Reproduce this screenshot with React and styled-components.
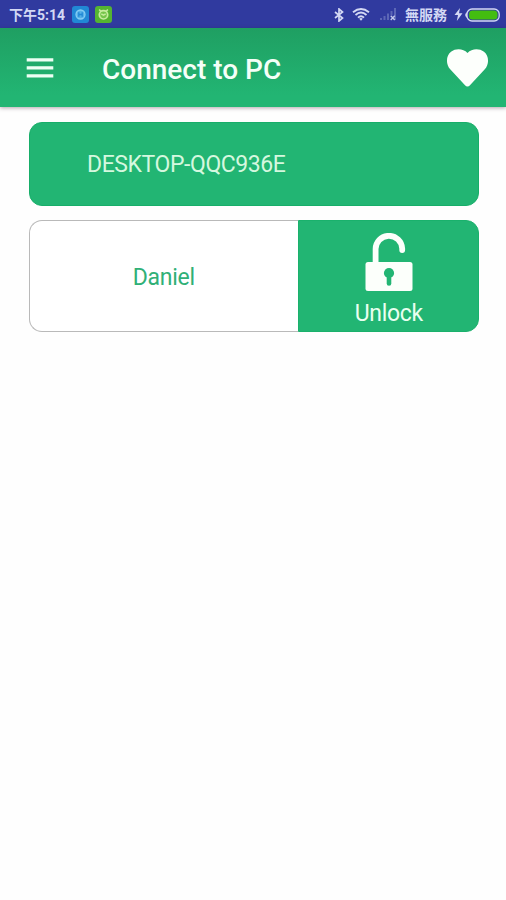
import React from 'react';
import styled, { createGlobalStyle } from 'styled-components';

const GREEN = '#22b573';

const GlobalStyle = createGlobalStyle`
  body {
    margin: 0;
    background: #fefefe;
    font-family: Roboto, 'Noto Sans CJK TC', sans-serif;
  }

  svg {
    display: block;
    flex: none;
  }
`;

const Screen = styled.div`
  width: 506px;
  min-height: 900px;
  overflow: hidden;
`;

const StatusBar = styled.div`
  box-sizing: border-box;
  display: flex;
  align-items: center;
  height: 28px;
  padding: 1px 6px 0 9px;
  background: #303a9f;
  color: #d3d8f4;
`;

const StatusText = styled.span`
  font-size: 14px;
  line-height: 20px;
  font-weight: 700;
  white-space: nowrap;
`;

const Notifications = styled.div`
  display: flex;
  gap: 6px;
  margin-left: 7px;
`;

const StatusIcons = styled.div`
  display: flex;
  align-items: center;
  margin-left: auto;
`;

const IconSlot = styled.div`
  margin-right: ${props => props.gap}px;
`;

const Carrier = styled(StatusText)`
  margin-right: 7px;
`;

const Header = styled.header`
  box-sizing: border-box;
  display: flex;
  align-items: center;
  height: 79px;
  padding: 0 17px 0 26px;
  background: linear-gradient(#1f9f62, ${GREEN} 85%);
  box-shadow: 0 1px 4px rgba(60, 30, 50, 0.4);
`;

const Title = styled.h1`
  flex: 1;
  margin: 5px 0 0 48px;
  color: #f4fff8;
  font-size: 28px;
  line-height: 34px;
  font-weight: 500;
`;

const IconButton = styled.button`
  padding: 0;
  border: 0;
  background: none;
  color: #fdfffc;
`;

const Content = styled.main`
  display: flex;
  flex-direction: column;
  gap: 14px;
  padding: 15px 27.5px 0 28.5px;
`;

const ComputerCard = styled.section`
  box-sizing: border-box;
  display: flex;
  align-items: center;
  height: 84px;
  padding: 2px 58px 0 57.5px;
  border: 1px solid #17ae69;
  border-radius: 13px;
  background: ${GREEN};
  color: #d5f8df;
  font-size: 23px;
  line-height: 28px;
  letter-spacing: -0.42px;
`;

const AccountCard = styled.section`
  display: grid;
  grid-template-columns: 269.5px 1fr;
  height: 112px;
`;

const AccountName = styled.div`
  display: flex;
  align-items: center;
  justify-content: center;
  padding-top: 2px;
  border: 1px solid #b9b9b9;
  border-right: 0;
  border-radius: 13px 0 0 13px;
  background: #fff;
  color: #30b077;
  font-size: 23px;
  letter-spacing: -0.3px;
`;

const UnlockButton = styled.button`
  display: flex;
  flex-direction: column;
  align-items: center;
  padding: 12px 0 0 1px;
  border: 1px solid #1ab16c;
  border-radius: 0 13px 13px 0;
  background: ${GREEN};
  color: #e9fff0;
  font: 23px Roboto, sans-serif;
  line-height: 28px;
  letter-spacing: -0.3px;
`;

const UnlockLabel = styled.span`
  margin-top: 8px;
`;

const MessengerIcon = () => (
  <svg width="17" height="17" viewBox="0 0 17 17">
    <rect width="17" height="17" rx="3" fill="#2188d5" />
    <circle cx="8.5" cy="8.5" r="4.5" fill="#55b0e8" stroke="#86cdf4" strokeWidth="1.3" />
    <path d="M6.8 6.3v4.4M10.2 6.3v4.4M6.8 8.5h3.4" stroke="#2188d5" strokeWidth="1.3" />
  </svg>
);

const AndroidIcon = () => (
  <svg width="17" height="17" viewBox="0 0 17 17">
    <rect width="17" height="17" rx="3" fill="#55b431" />
    <path d="M4.2 3.5l1.5 1.8M12.8 3.5l-1.5 1.8" stroke="#c6ec9d" strokeWidth="1.6" />
    <circle cx="8.5" cy="8.8" r="4.2" fill="#76c54b" stroke="#c6ec9d" strokeWidth="1.7" />
    <path d="M6.3 7.8l2.2 1.3 2.2-1.3" fill="none" stroke="#c6ec9d" strokeWidth="1.4" />
  </svg>
);

const BluetoothIcon = () => (
  <svg width="10" height="14" viewBox="0 0 10 14">
    <path d="M1 4l7.5 6L5 13V1l3.5 3L1 10" fill="none" stroke="#d3d8f4" strokeWidth="1.7" />
  </svg>
);

const WifiIcon = () => (
  <svg width="18" height="13" viewBox="0 0 18 13">
    <g fill="none" stroke="#d3d8f4" strokeWidth="1.9">
      <path d="M1 4.3Q9-2.2 17 4.3" />
      <path d="M3.5 7Q9 2.2 14.5 7" />
      <path d="M6 9.6q3-2.7 6 0" />
    </g>
    <path d="M7.2 10.7q1.8-1.4 3.6 0L9 12.8z" fill="#d3d8f4" />
  </svg>
);

const SignalIcon = () => (
  <svg width="17" height="13" viewBox="0 0 17 13">
    <g fill="#5c67b6">
      <rect x="0" y="10" width="2" height="2" />
      <rect x="3.5" y="8" width="2" height="4" />
      <rect x="7" y="5.5" width="2" height="6.5" />
      <rect x="10.5" y="3" width="2" height="4" />
      <rect x="14" y="0" width="2" height="12" />
    </g>
    <path d="M10.7 7.7l4 4.3M14.7 7.7l-4 4.3" stroke="#c4caec" strokeWidth="1.3" />
  </svg>
);

const BoltIcon = () => (
  <svg width="9" height="13" viewBox="0 0 9 13">
    <path d="M6 0L.5 7H4l-1.2 6L8.5 5.3H5z" fill="#d3d8f4" />
  </svg>
);

const BatteryIcon = () => (
  <svg width="35" height="14" viewBox="0 0 35 14">
    <path d="M3 4.5Q.7 4.5.7 7T3 9.5" fill="#d3d8f4" stroke="#d3d8f4" />
    <rect x="2" y="1" width="32.2" height="12" rx="5" fill="#303a9f" stroke="#d3d8f4" strokeWidth="1.3" />
    <rect x="4" y="2.5" width="28.5" height="9" rx="3.5" fill="#43bd10" />
  </svg>
);

const MenuIcon = () => (
  <svg width="28" height="20" viewBox="0 0 28 20">
    <path d="M.7 1.8h26.6M.7 9.8h26.6M.7 17.8h26.6" stroke="#edfff4" strokeWidth="3.2" />
  </svg>
);

const HeartIcon = () => (
  <svg width="43" height="38" viewBox="0 0 43 38">
    <path
      d="M21.5 4C17.4-.3 10-1 5 2.8-.3 7-.2 15.4 4.2 20.3L18.8 36q2.7 3 5.4 0L38.8 20.3C43.2 15.4 43.3 7 38 2.8 33-1 25.6-.3 21.5 4z"
      fill="currentColor"
    />
  </svg>
);

const UnlockIcon = () => (
  <svg width="48" height="59" viewBox="0 0 48 59">
    <path
      d="M10.6 31V16.5a13.3 13.3 0 0 1 26.6-.8V17"
      fill="none"
      stroke="#fcfffb"
      strokeWidth="5.8"
      strokeLinecap="round"
    />
    <rect x=".5" y="29" width="47" height="29" rx="2.5" fill="#fcfffb" />
    <circle cx="24" cy="40" r="5.1" fill={GREEN} />
    <path d="M24 41v9.5" stroke={GREEN} strokeWidth="4.6" strokeLinecap="round" />
  </svg>
);

const App = () => (
  <>
    <GlobalStyle />
    <Screen>
      <StatusBar>
        <StatusText>下午5:14</StatusText>
        <Notifications>
          <MessengerIcon />
          <AndroidIcon />
        </Notifications>
        <StatusIcons>
          <IconSlot gap={8}><BluetoothIcon /></IconSlot>
          <IconSlot gap={10}><WifiIcon /></IconSlot>
          <IconSlot gap={8}><SignalIcon /></IconSlot>
          <Carrier>無服務</Carrier>
          <IconSlot gap={2}><BoltIcon /></IconSlot>
          <BatteryIcon />
        </StatusIcons>
      </StatusBar>
      <Header>
        <IconButton aria-label="Menu"><MenuIcon /></IconButton>
        <Title>Connect to PC</Title>
        <IconButton aria-label="Favorite"><HeartIcon /></IconButton>
      </Header>
      <Content>
        <ComputerCard>DESKTOP-QQC936E</ComputerCard>
        <AccountCard>
          <AccountName>Daniel</AccountName>
          <UnlockButton>
            <UnlockIcon />
            <UnlockLabel>Unlock</UnlockLabel>
          </UnlockButton>
        </AccountCard>
      </Content>
    </Screen>
  </>
);

export default App;
